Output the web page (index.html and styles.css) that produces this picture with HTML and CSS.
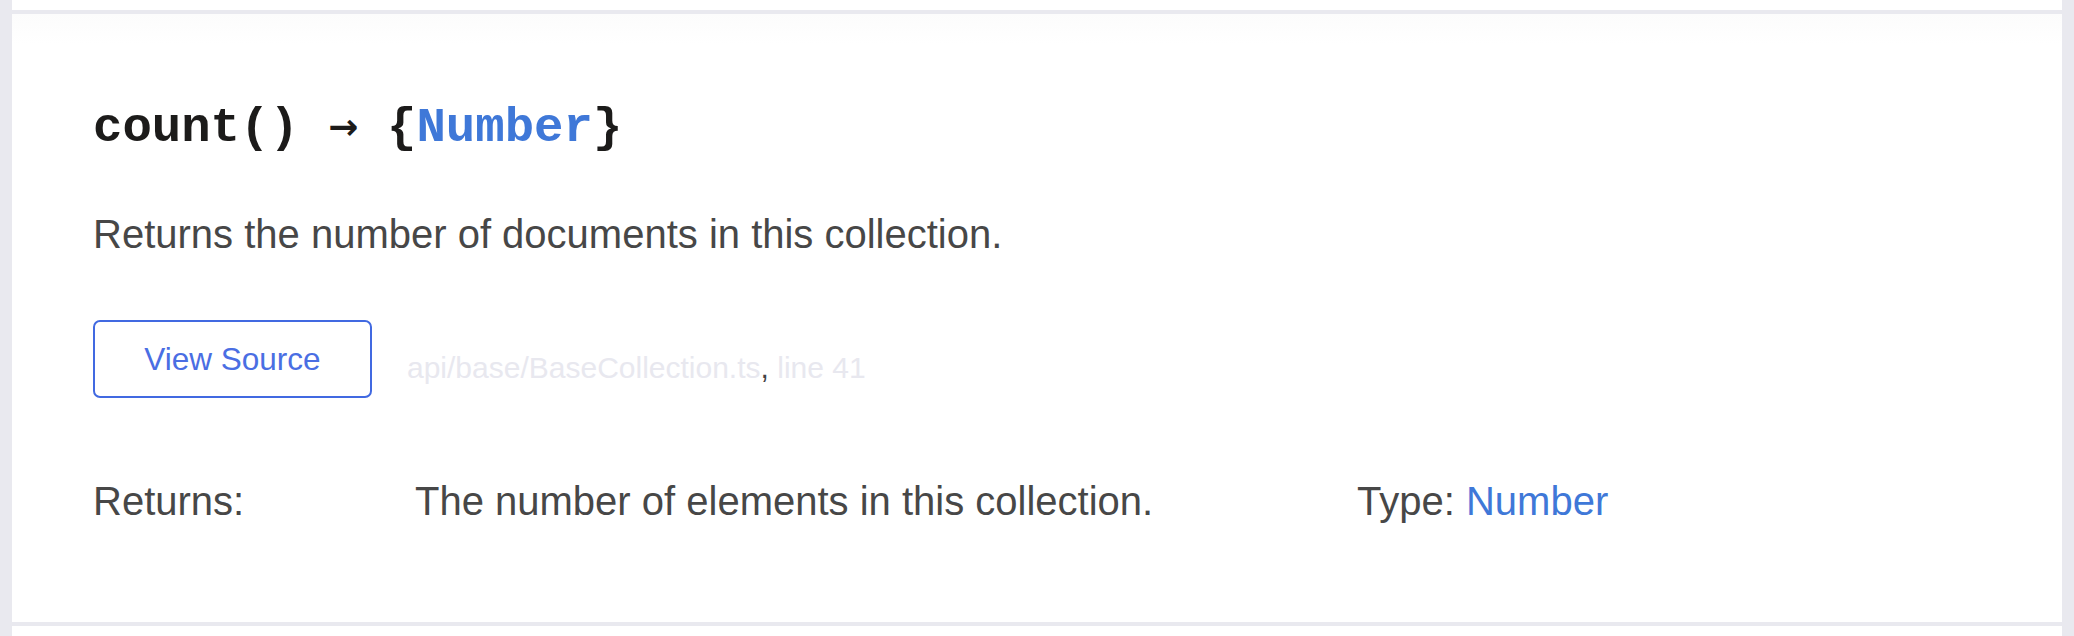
FILE: index.html
```html
<!DOCTYPE html>
<html lang="en">
<head>
<meta charset="utf-8">
<title>count</title>
<link rel="stylesheet" href="styles.css">
</head>
<body>
<div class="main">
  <div class="member">
    <h4 class="name">count() <span class="arrow">→</span> {<span class="type">Number</span>}</h4>
    <p class="description">Returns the number of documents in this collection.</p>
    <div class="source-row">
      <a class="btn-source">View Source</a>
      <span class="source-link"><span class="muted">api/base/BaseCollection.ts</span>, <span class="muted">line 41</span></span>
    </div>
    <div class="returns">
      <div class="returns-label">Returns:</div>
      <div class="returns-desc">The number of elements in this collection.</div>
      <div class="returns-type">Type: <span class="type-link">Number</span></div>
    </div>
  </div>
</div>
</body>
</html>
```

FILE: styles.css
```css
html, body {
  margin: 0;
  padding: 0;
}
body {
  background: #e9e9ef;
  font-family: "Liberation Sans", Arial, sans-serif;
}
.main {
  margin: 0 12px;
  background: #ffffff;
  height: 636px;
  padding-top: 10px;
  box-sizing: border-box;
}
.member {
  border-top: 4px solid #e9e9ef;
  border-bottom: 4px solid #e9e9ef;
  height: 616px;
  box-sizing: border-box;
  padding: 89px 0 0 81px;
  background: linear-gradient(#fcfcfc, #ffffff 30px);
}
.name {
  margin: 0;
  font-family: "Liberation Mono", "Courier New", monospace;
  font-weight: bold;
  font-size: 49px;
  line-height: 48px;
  color: #1c1b1a;
}
.name .arrow {
  display: inline-block;
  width: 29.4px;
  text-align: center;
  font-family: "DejaVu Sans", sans-serif;
  font-weight: bold;
  font-size: 36px;
  vertical-align: 2px;
}
.name .type {
  color: #3f78d8;
}
.description {
  margin: 62px 0 0;
  font-size: 40px;
  line-height: 40px;
  color: #474747;
}
.source-row {
  display: flex;
  align-items: center;
  margin-top: 66px;
}
.btn-source {
  box-sizing: border-box;
  width: 279px;
  height: 78px;
  border: 2px solid #4169e1;
  border-radius: 7px;
  display: flex;
  align-items: center;
  justify-content: center;
  color: #4a6ee3;
  font-size: 31.5px;
}
.source-link {
  margin-left: 35px;
  padding-top: 18px;
  font-size: 30px;
  color: #444444;
}
.source-link .muted {
  color: #e8e8ef;
}
.returns {
  display: flex;
  margin-top: 83px;
  font-size: 40px;
  line-height: 40px;
  color: #474747;
}
.returns-label {
  width: 322px;
  flex: none;
}
.returns-desc {
  width: 942px;
  flex: none;
}
.type-link {
  color: #3f78d8;
}
```
